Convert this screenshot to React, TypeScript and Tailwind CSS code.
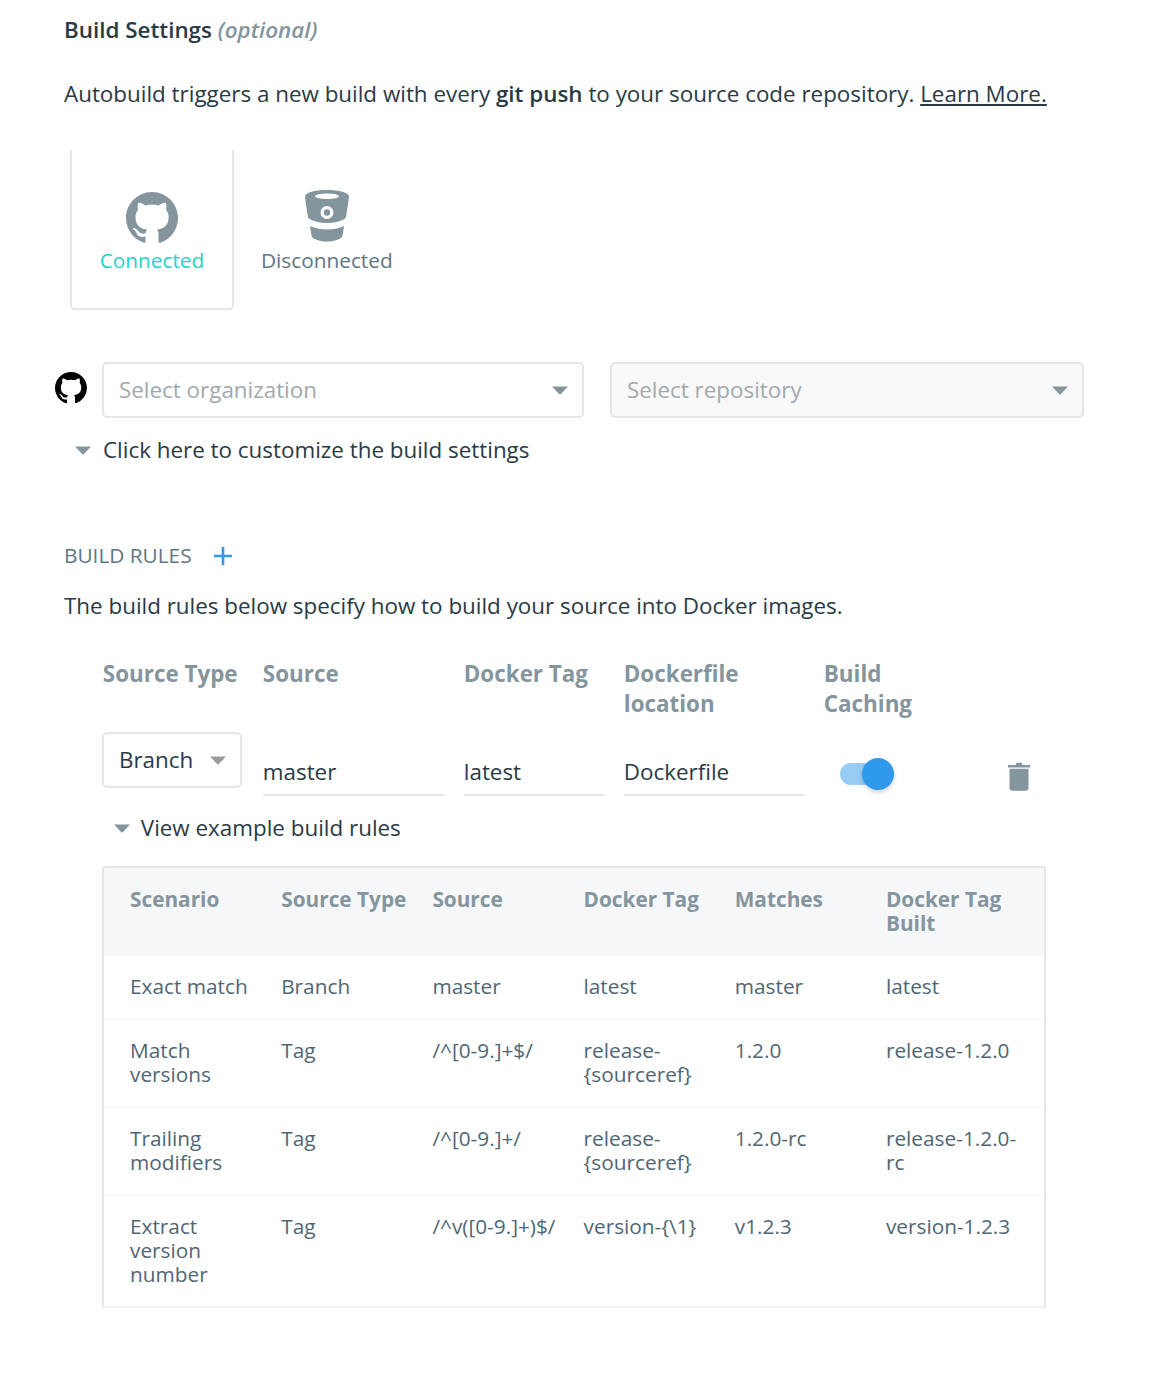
const GITHUB_PATH =
  "M8 0C3.58 0 0 3.58 0 8c0 3.54 2.29 6.53 5.47 7.59.4.07.55-.17.55-.38 0-.19-.01-.82-.01-1.49-2.01.37-2.53-.49-2.69-.94-.09-.23-.48-.94-.82-1.13-.28-.15-.68-.52-.01-.53.63-.01 1.08.58 1.23.82.72 1.21 1.87.87 2.33.66.07-.52.28-.87.51-1.07-1.78-.2-3.64-.89-3.64-3.95 0-.87.31-1.59.82-2.15-.08-.2-.36-1.02.08-2.12 0 0 .67-.21 2.2.82.64-.18 1.32-.27 2-.27.68 0 1.36.09 2 .27 1.53-1.04 2.2-.82 2.2-.82.44 1.1.16 1.92.08 2.12.51.56.82 1.27.82 2.15 0 3.07-1.87 3.75-3.65 3.95.29.25.54.73.54 1.48 0 1.07-.01 1.93-.01 2.2 0 .21.15.46.55.38A8.013 8.013 0 0016 8c0-4.42-3.58-8-8-8z";

function GithubIcon({ className }: { className: string }) {
  return (
    <svg viewBox="0 0 16 16" className={className} fill="currentColor">
      <path fillRule="evenodd" d={GITHUB_PATH} />
    </svg>
  );
}

function BitbucketIcon() {
  return (
    <svg viewBox="0 0 46 52" className="h-[52px] w-[46px] text-[#84959e]" fill="currentColor">
      <path
        fillRule="evenodd"
        d="M23 0C11 0 1 2.6 1 6.5c0 1 1.8 13.5 3 20.5.1.8 1 1.7 2 2.3 4 2.3 10 3.7 17 3.7s13-1.4 17-3.7c1-.6 1.900-1.500 2-2.300 1.200-7 3-19.500 3-20.500C45 2.600 35 0 23 0zM23 3.600c6.500 0 12 1.200 12 2.700S29.500 9 23 9 11 7.800 11 6.300s5.500-2.700 12-2.700zM23 16a6.500 6.500 0 1 1 0 13 6.500 6.500 0 0 1 0-13zM23 19.300a3.200 3.200 0 1 0 0 6.400 3.200 3.200 0 0 0 0-6.400z"
      />
      <path d="M6 36c5 2.400 11 3.500 17 3.500S35 38.400 40 36c-.4 2.800-1 6.500-1.300 8.700-.3 1.900-1 2.900-2.400 3.700C32.500 50.500 28 51.500 23 51.500s-9.500-1-13.300-3.100c-1.400-.8-2.100-1.800-2.400-3.700C7 42.500 6.400 38.800 6 36z" />
    </svg>
  );
}

function TrashIcon() {
  return (
    <svg viewBox="0 0 22 29" className="h-[29px] w-[22px] text-[#84959e]" fill="currentColor">
      <path d="M0 3h7.500L8.500 .8h5L14.500 3H22v2.400H0z" />
      <path d="M1.500 6.800h19V26c0 1.600-1.200 2.800-2.800 2.800H4.300c-1.600 0-2.800-1.200-2.800-2.800z" />
    </svg>
  );
}

function Caret({ className }: { className: string }) {
  return (
    <svg viewBox="0 0 16 9" className={className} fill="currentColor">
      <path d="M0 .5h16L8.700 8.200c-.4.400-1 .4-1.400 0z" />
    </svg>
  );
}

const exampleHead = ["Scenario", "Source Type", "Source", "Docker Tag", "Matches", "Docker Tag Built"];

const exampleRows = [
  ["Exact match", "Branch", "master", "latest", "master", "latest"],
  ["Match versions", "Tag", "/^[0-9.]+$/", "release-{sourceref}", "1.2.0", "release-1.2.0"],
  ["Trailing modifiers", "Tag", "/^[0-9.]+/", "release-{sourceref}", "1.2.0-rc", "release-1.2.0-rc"],
  ["Extract version number", "Tag", "/^v([0-9.]+)$/", "version-{\\1}", "v1.2.3", "version-1.2.3"],
];

export default function App() {
  return (
    <div className="h-[1374px] w-[1158px] overflow-hidden bg-white pl-[64px] font-['Open_Sans',sans-serif] text-[22.4px] text-[#2a3a45]">
      {/* Build settings */}
      <h2 className="pt-[15px] text-[22.4px] leading-[30px] font-semibold">
        Build Settings <em className="text-[#84959e]">(optional)</em>
      </h2>
      <p className="mt-[34px] leading-[30px]">
        Autobuild triggers a new build with every <strong className="font-semibold">git push</strong> to your source
        code repository. <a className="underline">Learn More.</a>
      </p>

      {/* Source providers */}
      <div className="mt-[41px] ml-[6px] flex items-start">
        <div className="flex h-[160px] w-[164px] flex-col items-center rounded-b-[5px] border-2 border-t-0 border-[#e3e7ea] pt-[42px]">
          <GithubIcon className="h-[52px] w-[52px] text-[#84959e]" />
          <span className="mt-[1px] text-[20.8px] leading-[30px] text-[#22d3c8]">Connected</span>
        </div>
        <div className="flex h-[160px] flex-col items-center pt-[40px] pl-[27px]">
          <BitbucketIcon />
          <span className="mt-[3px] text-[20.8px] leading-[30px] text-[#5f7684]">Disconnected</span>
        </div>
      </div>

      {/* Repository selects */}
      <div className="mt-[52px] -ml-[9px] flex items-start">
        <GithubIcon className="mt-[10px] h-[32px] w-[32px] text-black" />
        <div className="ml-[15px] flex h-[56px] w-[482px] items-center justify-between rounded-[5px] border-2 border-[#e3e7ea] pr-[14px] pl-[15px] text-[#a2a9ad]">
          Select organization
          <Caret className="h-[9px] w-[16px] text-[#84959e]" />
        </div>
        <div className="ml-[26px] flex h-[56px] w-[474px] items-center justify-between rounded-[5px] border-2 border-[#e3e7ea] bg-[#f9f9f9] pr-[14px] pl-[15px] text-[#a2a9ad]">
          Select repository
          <Caret className="h-[9px] w-[16px] text-[#84959e]" />
        </div>
      </div>
      <div className="mt-[17px] ml-[11px] flex items-center leading-[30px]">
        <Caret className="h-[9px] w-[16px] text-[#84959e]" />
        <span className="ml-[12px]">Click here to customize the build settings</span>
      </div>

      {/* Build rules */}
      <div className="mt-[75px] flex items-center leading-[30px] text-[#5f7684]">
        <span className="mb-[2px] text-[20.8px]">BUILD RULES</span>
        <svg viewBox="0 0 18 18" className="ml-[22px] h-[18px] w-[18px] text-[#2f9aec]" fill="none" stroke="currentColor" strokeWidth="2.6">
          <path d="M9 0v18M0 9h18" />
        </svg>
      </div>
      <p className="mt-[19px] leading-[30px]">The build rules below specify how to build your source into Docker images.</p>

      <div className="mt-[38px] ml-[38.8px]">
        <div className="grid grid-cols-[160px_201px_160px_200px_184px] text-[22.4px] leading-[30px] font-bold text-[#84959e]">
          <span>Source Type</span>
          <span>Source</span>
          <span>Docker Tag</span>
          <span className="w-[150px]">Dockerfile location</span>
          <span className="w-[110px]">Build Caching</span>
        </div>
        <div className="mt-[13px] grid grid-cols-[160px_201px_160px_200px_184px_40px] items-start">
          <div className="-ml-[0.8px] flex h-[56px] w-[140px] items-center justify-between rounded-[5px] border-2 border-[#e3e7ea] pr-[14px] pl-[15px]">
            Branch
            <Caret className="h-[9px] w-[16px] text-[#9b9b9b]" />
          </div>
          <div className="mt-[25px] h-[39px] w-[181px] border-b-2 border-[#e3e7ea] leading-[30px]">master</div>
          <div className="mt-[25px] h-[39px] w-[140px] border-b-2 border-[#e3e7ea] leading-[30px]">latest</div>
          <div className="mt-[25px] h-[39px] w-[180px] border-b-2 border-[#e3e7ea] leading-[30px]">Dockerfile</div>
          <div className="relative mt-[31px] ml-[16px] h-[22px] w-[44px] rounded-full bg-[#97cdf5]">
            <div className="absolute top-[-5px] left-[22px] h-[32px] w-[32px] rounded-full bg-[#2f9aec] shadow-[0_2px_4px_rgba(0,0,0,0.2)]" />
          </div>
          <div className="mt-[30px]">
            <TrashIcon />
          </div>
        </div>
        <div className="mt-[17px] ml-[11px] flex items-center leading-[30px]">
          <Caret className="h-[9px] w-[16px] text-[#84959e]" />
          <span className="ml-[11px]">View example build rules</span>
        </div>

        {/* Example table */}
        <div className="mt-[23px] -ml-[0.8px] w-[944px] rounded-t-[3px] border-x-2 border-t-2 border-b-2 border-[#e3e7ea] border-b-[#f3f4f5] text-[20.8px] leading-[24px]">
          <div className="grid grid-cols-[repeat(6,131.2px)] gap-x-5 bg-[#f6f7f9] pt-[19px] pb-[21px] pl-[26px] font-bold text-[#84959e]">
            {exampleHead.map((h) => (
              <span key={h}>{h}</span>
            ))}
          </div>
          {exampleRows.map((row, i) => (
            <div
              key={row[0]}
              className={
                i < exampleRows.length - 1
                  ? "grid grid-cols-[repeat(6,131.2px)] gap-x-5 border-b border-[#f3f4f5] pt-[18px] pb-[21px] pl-[26px] text-[#4f6675]"
                  : "grid grid-cols-[repeat(6,131.2px)] gap-x-5 pt-[18px] pb-[20px] pl-[26px] text-[#4f6675]"
              }
            >
              {row.map((cell, j) => (
                <span key={j}>{cell}</span>
              ))}
            </div>
          ))}
        </div>
      </div>
    </div>
  );
}
